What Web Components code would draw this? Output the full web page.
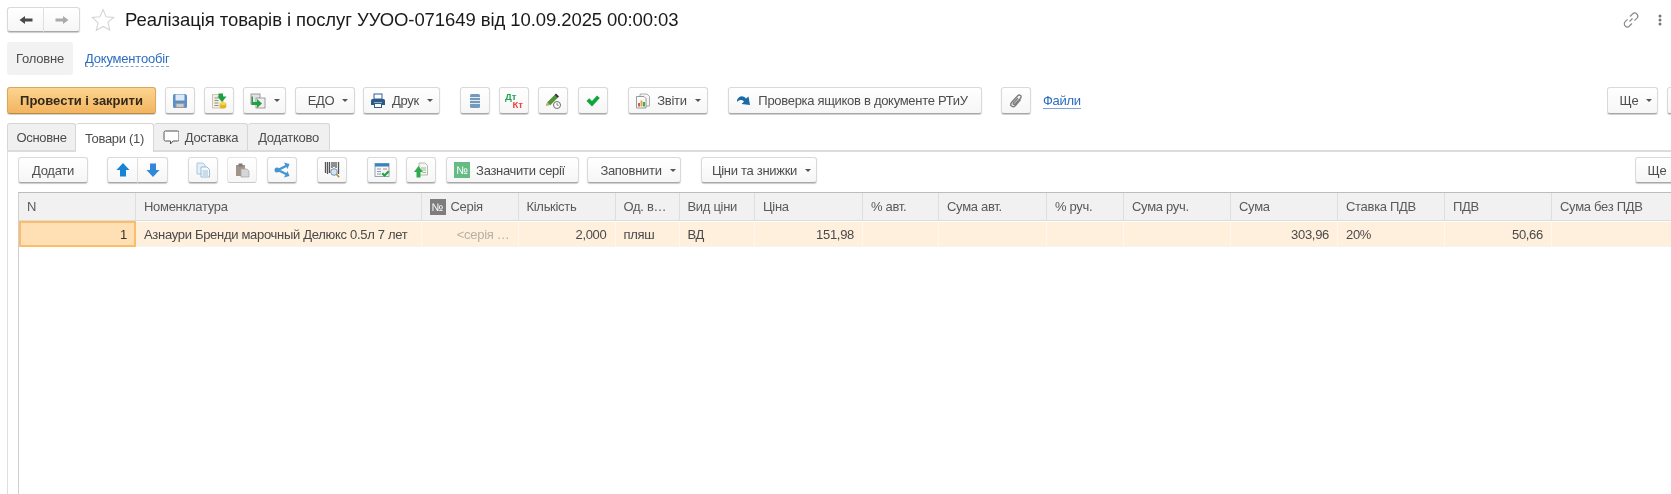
<!DOCTYPE html>
<html lang="uk">
<head>
<meta charset="utf-8">
<title>Реалізація товарів і послуг</title>
<style>
  html, body { margin: 0; height: 494px; overflow: hidden; background: #fff; }
  body { font: 13px "Liberation Sans", Arial, sans-serif; letter-spacing: -.3px; color: #4d4d4d; width: 1671px; filter: blur(.35px); }
</style>
</head>
<body>

<form-header>
  <ui-button slot="nav" seg="l" w="37"><ui-icon slot="icon" name="back"></ui-icon></ui-button>
  <ui-button slot="nav" seg="r" w="36"><ui-icon slot="icon" name="forward"></ui-icon></ui-button>
  Реалізація товарів і послуг УУОО-071649 від 10.09.2025 00:00:03
</form-header>

<section-bar>
  <section-item active>Головне</section-item>
  <section-item>Документообіг</section-item>
</section-bar>

<tool-bar style="--btn-h:27px" top="87">
  <ui-button primary w="149">Провести і закрити</ui-button>
  <ui-button w="30" ml="9"><ui-icon slot="icon" name="save"></ui-icon></ui-button>
  <ui-button w="30" ml="9"><ui-icon slot="icon" name="post"></ui-icon></ui-button>
  <ui-button w="43" ml="9" drop><ui-icon slot="icon" name="related"></ui-icon></ui-button>
  <ui-button w="60" ml="9" drop style="--pl:6px">ЕДО</ui-button>
  <ui-button w="77" ml="8" drop><ui-icon slot="icon" name="print"></ui-icon>Друк</ui-button>
  <ui-button w="30" ml="20"><ui-icon slot="icon" name="stack"></ui-icon></ui-button>
  <ui-button w="30" ml="9"><dt-kt slot="icon"></dt-kt></ui-button>
  <ui-button w="30" ml="9"><ui-icon slot="icon" name="pencil"></ui-icon></ui-button>
  <ui-button w="30" ml="10"><ui-icon slot="icon" name="check"></ui-icon></ui-button>
  <ui-button w="80" ml="20" drop><ui-icon slot="icon" name="report"></ui-icon>Звіти</ui-button>
  <ui-button w="254" ml="20" style="--pr:6px"><ui-icon slot="icon" name="turn"></ui-icon>Проверка ящиков в документе РТиУ</ui-button>
  <ui-button w="30" ml="19"><ui-icon slot="icon" name="clip"></ui-icon></ui-button>
  <link-text ml="12">Файли</link-text>
  <clip-end w="64">
    <ui-button w="51" drop style="--pl:7px">Ще</ui-button>
    <ui-button w="30" ml="9"></ui-button>
  </clip-end>
</tool-bar>

<tab-strip>
  <tab-item w="69">Основне</tab-item>
  <tab-item w="78" active>Товари (1)</tab-item>
  <tab-item w="94"><ui-icon slot="icon" name="comment"></ui-icon>Доставка</tab-item>
  <tab-item w="82">Додатково</tab-item>
</tab-strip>

<tab-panel>
  <tool-bar style="--btn-h:26px">
    <ui-button w="70">Додати</ui-button>
    <ui-button w="31" ml="19" seg="l"><ui-icon slot="icon" name="up"></ui-icon></ui-button>
    <ui-button w="30" seg="r"><ui-icon slot="icon" name="down"></ui-icon></ui-button>
    <ui-button w="30" ml="20"><ui-icon slot="icon" name="copy"></ui-icon></ui-button>
    <ui-button w="30" ml="9" off><ui-icon slot="icon" name="paste"></ui-icon></ui-button>
    <ui-button w="30" ml="10"><ui-icon slot="icon" name="share"></ui-icon></ui-button>
    <ui-button w="30" ml="20"><ui-icon slot="icon" name="barcode"></ui-icon></ui-button>
    <ui-button w="30" ml="20"><ui-icon slot="icon" name="tablecheck"></ui-icon></ui-button>
    <ui-button w="30" ml="9"><ui-icon slot="icon" name="upload"></ui-icon></ui-button>
    <ui-button w="133" ml="10" style="--pr:6px"><num-sign slot="icon" color="#66bb85"></num-sign>Зазначити серії</ui-button>
    <ui-button w="94" ml="8" drop style="--pl:8px">Заповнити</ui-button>
    <ui-button w="116" ml="20" drop style="--pl:5px">Ціни та знижки</ui-button>
    <clip-end w="36"><ui-button w="51" drop style="--pl:7px">Ще</ui-button></clip-end>
  </tool-bar>

  <data-grid>
    <grid-cell head>N</grid-cell>
    <grid-cell head>Номенклатура</grid-cell>
    <grid-cell head><num-sign color="#7d7d7d"></num-sign>Серія</grid-cell>
    <grid-cell head>Кількість</grid-cell>
    <grid-cell head>Од. в…</grid-cell>
    <grid-cell head>Вид ціни</grid-cell>
    <grid-cell head>Ціна</grid-cell>
    <grid-cell head>% авт.</grid-cell>
    <grid-cell head>Сума авт.</grid-cell>
    <grid-cell head>% руч.</grid-cell>
    <grid-cell head>Сума руч.</grid-cell>
    <grid-cell head>Сума</grid-cell>
    <grid-cell head>Ставка ПДВ</grid-cell>
    <grid-cell head>ПДВ</grid-cell>
    <grid-cell head>Сума без ПДВ</grid-cell>

    <grid-cell right current>1</grid-cell>
    <grid-cell>Азнаури Бренди марочный Делюкс 0.5л 7 лет</grid-cell>
    <grid-cell right hint>&lt;серія …</grid-cell>
    <grid-cell right>2,000</grid-cell>
    <grid-cell>пляш</grid-cell>
    <grid-cell>ВД</grid-cell>
    <grid-cell right>151,98</grid-cell>
    <grid-cell></grid-cell>
    <grid-cell></grid-cell>
    <grid-cell></grid-cell>
    <grid-cell></grid-cell>
    <grid-cell right>303,96</grid-cell>
    <grid-cell>20%</grid-cell>
    <grid-cell right>50,66</grid-cell>
    <grid-cell></grid-cell>
  </data-grid>
</tab-panel>

<script>
// Icon set, all on a 16x16 box
const ICONS = {
  back: '<path d="M1.500 8 7 4v2.600h7.500v2.800H7V12z" fill="#4a4a4a"/>',
  forward: '<path d="M14.500 8 9 4v2.600H1.500v2.800H9V12z" fill="#aaa"/>',
  save: '<path d="M1 2.500A1.500 1.500 0 0 1 2.500 1h11L15 2.500v11a1.500 1.500 0 0 1-1.500 1.500h-11A1.500 1.500 0 0 1 1 13.500z" fill="#5b8fca"/><rect x="3.500" y="1.500" width="9" height="6" fill="#dfe9f5"/><rect x="3.500" y="10" width="9" height="5" fill="#9a9a9a"/><rect x="4.500" y="11" width="7" height="3" fill="#ccc"/>',
  post: '<path d="M1.500 1.500h9l1.500 1.500v12h-10.500z" fill="#f1efe2" stroke="#bdb9a0" stroke-width=".8"/><path d="M3.500 5h4M3.500 7.500h4M3.500 10h4M3.500 12.500h4" stroke="#8f8f86"/><ellipse cx="12" cy="10.500" rx="3.300" ry="1.500" fill="#f6d548"/><path d="M8.700 10.500v3.500c0 .8 1.500 1.500 3.300 1.500s3.300-.7 3.300-1.500v-3.500c0 .8-1.500 1.500-3.300 1.500s-3.300-.7-3.300-1.500z" fill="#e3b525"/><path d="M7.500 .5h4.500v3h3.500L11 9 6.500 3.500h1z" fill="#1f9e40"/>',
  related: '<rect x="1" y="1" width="9" height="10" fill="#e3e3e3" stroke="#8a8a8a" stroke-width=".8"/><rect x="6" y="5" width="9" height="10" fill="#efefef" stroke="#8a8a8a" stroke-width=".8"/><path d="M3 3.500v5.500h4V6l5 4.500L7 15v-3H1.500V3.500z" fill="#22a044"/>',
  print: '<rect x="4" y="1" width="8" height="5" fill="#fff" stroke="#2f5f90"/><path d="M1 7.500A1.500 1.500 0 0 1 2.500 6h11A1.500 1.500 0 0 1 15 7.500V12h-3V9.500H4V12H1z" fill="#2a5a8c"/><rect x="4.500" y="10.500" width="7" height="4" fill="#fff" stroke="#2f5f90"/>',
  stack: '<rect x="3" y="1" width="10" height="14" rx="1.500" fill="#7399bd"/><path d="M3 4.500h10M3 7.500h10M3 10.500h10" stroke="#dfe9f2" stroke-width="1"/>',
  pencil: '<path d="M1 12.500 2.500 9 9.500 2l3 3-7 7z" fill="#4f9438"/><path d="m9.500 2 1.500-1.500 3 3L12.500 5z" fill="#333"/><path d="M1 12.500 2.500 9l2.500 3z" fill="#d0a868"/><circle cx="12" cy="12" r="3.500" fill="#fff" stroke="#6a6a6a"/><path d="M12 10v2.200h1.700" stroke="#6a6a6a" fill="none" stroke-width=".8"/>',
  check: '<path d="m1.500 8 2.700-2.700L7 8l5-5.500L14.800 5 7 13.500z" fill="#12a53c"/>',
  report: '<path d="M5 1h7l2.500 2.500V13H5z" fill="#f4f4f4" stroke="#999" stroke-width=".8"/><path d="M1.500 3.500H9l2 2V15H1.500z" fill="#fbfbfb" stroke="#808080" stroke-width=".8"/><rect x="3" y="10" width="2" height="3.500" fill="#d9584c"/><rect x="5.500" y="7.500" width="2" height="6" fill="#e0a83a"/><rect x="8" y="9" width="2" height="4.500" fill="#3ea860"/>',
  turn: '<path d="M1 7c2-4.500 6-5 9-1.500L12.500 3.500l1.500 8.500-8.500-1L8 8.500C6 6.500 3.500 6.500 1 9z" fill="#1a6aa8"/>',
  clip: '<path d="M12.500 6.500 7.500 12.500c-1.300 1.500-3 1.500-4 .6s-1-2.500.2-3.900L9.500 3c1-1.100 2.200-1.200 3-.5s.8 1.900-.2 3L7 11c-.5.600-1.200.7-1.600.3s-.3-1 .2-1.600L10 5" fill="none" stroke="#7d7d7d" stroke-width="1.400"/>',
  comment: '<path d="M2.500 2h12A1.500 1.500 0 0 1 16 3.500v7a1.500 1.500 0 0 1-1.500 1.500H10l-2.500 3V12h-5A1.500 1.500 0 0 1 1 10.500v-7A1.500 1.500 0 0 1 2.500 2z" fill="#fff" stroke="#555" stroke-width="1"/>',
  up: '<path d="M8 1 14.500 8H11v6.500H5V8H1.500z" fill="#1783d4"/>',
  down: '<path d="M8 15 14.500 8H11V1.500H5V8H1.500z" fill="#2f88da"/>',
  copy: '<path d="M2 1h6l2 2v9H2z" fill="#e6f0f8" stroke="#9dbcd6" stroke-width=".8"/><path d="M6 5h6l2.500 2.500V15H6z" fill="#f7fafd" stroke="#86abca" stroke-width=".8"/><path d="M7.500 9h5.500M7.500 11h5.500M7.500 13h5.500" stroke="#9dbcd6"/>',
  paste: '<path d="M2 3h9v11H2z" fill="#a19489"/><rect x="4.500" y="1.500" width="4" height="3" fill="#85796f"/><path d="M7 7h6l2 2v6H7z" fill="#d6d6d6" stroke="#a5a5a5" stroke-width=".7"/>',
  share: '<path d="M13 3.500 6 7a1.200 1.200 0 0 0 0 2l7 3.500" fill="none" stroke="#4795d0" stroke-width="2.400"/><circle cx="3" cy="8" r="2.500" fill="#4795d0"/><path d="m10 .5 5.500 1.500-2 5zM10 15.500l5.500-1.500-2-5z" fill="#4795d0"/>',
  barcode: '<path d="M1.500 0v11M3.500 0v12M5.500 0v11M8 0v6M10 0v5M12 0v6M14.500 0v12" stroke="#555" stroke-width="1.300"/><circle cx="10" cy="10" r="3.300" fill="#d5e4f2" stroke="#6f93b5"/><path d="m12.200 12.200 3 3" stroke="#c0903f" stroke-width="1.700"/>',
  tablecheck: '<rect x="1" y="1.500" width="14" height="13" fill="#f4f6f8" stroke="#7f909f" stroke-width=".8"/><rect x="1" y="1.500" width="14" height="3" fill="#3a81c3"/><path d="M3 7h4M3 9.500h4M3 12h4" stroke="#8e9ca9"/><path d="M9 7h4" stroke="#e07b6a"/><path d="m7.500 12 1.500-1.500L10.500 12 14 8.500l1.500 1.500-5 5z" fill="#1da343"/>',
  upload: '<path d="M6 1h6l2.500 2.500V13H6z" fill="#f5f7f2" stroke="#9eae97" stroke-width=".8"/><path d="M8 6h5M8 8h5M9.500 10.500h3.500" stroke="#9fbc92"/><path d="M5.500 4 10 10H7.500v5.500h-4V10H1z" fill="#2fab4e"/>'
};

// Shared base: each element has a static css and markup that go in an open shadow root
class ShadowBase extends HTMLElement {
  constructor() {
    super();
    this.attachShadow({ mode: 'open' }).innerHTML = `<style>${this.constructor.css}</style>${this.constructor.markup}`;
  }
  connectedCallback() {
    if (this.hasAttribute('w')) this.style.width = this.getAttribute('w') + 'px';
    if (this.hasAttribute('ml')) this.style.marginLeft = this.getAttribute('ml') + 'px';
  }
}

class UiIcon extends HTMLElement {
  constructor() {
    super();
    this.attachShadow({ mode: 'open' });
  }
  connectedCallback() {
    const size = this.getAttribute('size') || 16;
    this.shadowRoot.innerHTML = `<style>:host{display:block;line-height:0}</style>
      <svg width="${size}" height="${size}" viewBox="0 0 16 16">${ICONS[this.getAttribute('name')]}</svg>`;
  }
}

class UiButton extends ShadowBase {
  static css = `
    :host { display: block; flex: none; box-sizing: border-box; height: var(--btn-h, 27px); }
    .b { box-sizing: border-box; height: 100%; display: flex; align-items: center; justify-content: center; gap: 6px;
      padding: 0 var(--pr, 0) 0 var(--pl, 0);
      background: linear-gradient(#fff, #f6f6f6); border: 1px solid #d9d9d9; border-bottom-color: #a8a8a8;
      border-radius: 3px; box-shadow: 0 1px 1px rgba(0,0,0,.2); color: #4d4d4d; white-space: nowrap; }
    :host([primary]) .b { background: linear-gradient(#fbd48f, #f3b45f); border-color: #d9a85c #d9a85c #b98a43;
      color: #33291a; font-weight: bold; letter-spacing: 0; }
    :host([seg=l]) .b { border-radius: 3px 0 0 3px; border-right-color: #e4e4e4; }
    :host([seg=r]) .b { border-radius: 0 3px 3px 0; border-left: 0; }
    :host([off]) .b { border-color: #e6e6e6; border-bottom-color: #c8c8c8; box-shadow: none; }
    .arrow { display: none; width: 0; height: 0; margin-left: 2px; border: 3px solid transparent;
      border-top-color: #555; border-bottom: 0; }
    :host([drop]) .arrow { display: block; }
  `;
  static markup = `<div class="b"><slot name="icon"></slot><slot></slot><i class="arrow"></i></div>`;
}

class FormHeader extends ShadowBase {
  static css = `
    :host { display: flex; align-items: center; height: 25px; padding: 7px 0 0 7px; color: #1a1a1a; font-size: 18.500px; letter-spacing: -.08px; white-space: nowrap; --btn-h: 25px; }
    .nav { display: flex; }
    .star { margin: 0 10px 0 11px; }
    .tools { margin-left: auto; display: flex; align-items: center; gap: 19px; padding-right: 9px; }
    .title { flex: none; }
  `;
  static markup = `
    <div class="nav"><slot name="nav"></slot></div>
    <svg class="star" width="24" height="24" viewBox="0 0 22 22"><path d="m11 1.500 2.800 6.500 7 .6-5.300 4.600 1.600 6.900L11 16.900l-6.100 3.700 1.600-6.900L1.200 8.600l7-.6z" fill="#fff" stroke="#d4d4d4"/></svg>
    <span class="title"><slot></slot></span>
    <div class="tools">
      <svg width="16" height="16" viewBox="0 0 16 16" fill="none" stroke="#8a8a8a" stroke-width="1.200"><path d="M6.500 9.500 9.500 6.500M7 4.500 9.500 2a3 3 0 0 1 4.300 4.300l-2.400 2.400M9 11.500 6.500 14A3 3 0 0 1 2.200 9.700l2.400-2.400"/></svg>
      <svg width="4" height="12" viewBox="0 0 4 12" fill="#777"><circle cx="2" cy="2" r="1.500"/><circle cx="2" cy="6" r="1.500"/><circle cx="2" cy="10" r="1.500"/></svg>
    </div>
  `;
}

class SectionBar extends ShadowBase {
  static css = `:host { display: flex; align-items: stretch; gap: 12px; height: 33px; margin: 10px 0 12px 7px; }`;
  static markup = `<slot></slot>`;
}

class SectionItem extends ShadowBase {
  static css = `
    :host { display: flex; align-items: center; color: #2a6dc0; letter-spacing: -.2px; }
    span { border-bottom: 1px dashed #7ba4d8; line-height: 15px; }
    :host([active]) { background: #f2f2f2; border-radius: 3px; padding: 0 9px; color: #4d4d4d; }
    :host([active]) span { border: 0; }
  `;
  static markup = `<span><slot></slot></span>`;
}

class ToolBar extends ShadowBase {
  static css = `:host { display: flex; align-items: flex-start; height: 28px; padding-left: 7px; overflow: hidden; }`;
  static markup = `<slot></slot>`;
}

class ClipEnd extends ShadowBase {
  static css = `:host { display: flex; flex: none; margin-left: auto; height: 28px; overflow: hidden; }`;
  static markup = `<slot></slot>`;
}

class LinkText extends ShadowBase {
  static css = `:host { display: block; align-self: center; color: #2a6dc0; border-bottom: 1px solid #7ba4d8; line-height: 14px; }`;
  static markup = `<slot></slot>`;
}

class DtKt extends ShadowBase {
  static css = `
    :host { display: block; width: 18px; font: bold 9.500px/8px "Liberation Sans", Arial, sans-serif; letter-spacing: 0; }
    .d { color: #22a557; } .k { color: #e8453c; display: block; text-align: right; }
  `;
  static markup = `<span class="d">Дт</span><span class="k">Кт</span>`;
}

class NumSign extends ShadowBase {
  static css = `
    :host { display: inline-flex; flex: none; align-items: center; justify-content: center; width: 16px; height: 16px;
      color: #fff; font: 11px "Liberation Sans", Arial, sans-serif; letter-spacing: 0; background: var(--c); }
  `;
  static markup = `№`;
  connectedCallback() { this.style.setProperty('--c', this.getAttribute('color')); }
}

class TabStrip extends ShadowBase {
  static css = `:host { display: flex; height: 27px; margin: 8px 0 0 7px; }`;
  static markup = `<slot></slot>`;
}

class TabItem extends ShadowBase {
  static css = `
    :host { display: flex; flex: none; box-sizing: border-box; align-items: center; justify-content: center; gap: 6px;
      background: #f0f0f0; border: 1px solid #d6d6d6; border-bottom: 0; border-left: 0; border-radius: 3px 3px 0 0; }
    :host(:first-child) { border-left: 1px solid #d6d6d6; }
    :host([active]) { background: #fff; height: 29px; position: relative; z-index: 1; }
  `;
  static markup = `<slot name="icon"></slot><slot></slot>`;
}

class TabPanel extends ShadowBase {
  static css = `
    :host { display: block; box-sizing: border-box; height: 344px; margin-left: 7px; padding: 5px 0 0 10px;
      border-top: 2px solid #dcdcdc; border-left: 1px solid #dedede; }
    ::slotted(tool-bar) { padding-left: 0; margin-bottom: 7px; }
  `;
  static markup = `<slot></slot>`;
}

class DataGrid extends ShadowBase {
  static css = `
    :host { display: grid; box-sizing: border-box; height: 302px; align-content: start;
      grid-template-columns: 117px 285.500px 97px 97px 64px 75.500px 108px 76px 108px 77px 107px 107px 107px 107px 120px;
      grid-template-rows: 28px 26px; border-top: 1px solid #bcbcbc; border-left: 1px solid #d0d0d0; }
  `;
  static markup = `<slot></slot>`;
}

class GridCell extends ShadowBase {
  static css = `
    :host { display: flex; align-items: center; gap: 5px; box-sizing: border-box; min-width: 0; padding: 0 8px; white-space: nowrap; overflow: hidden;
      background: #ffefdd; color: #4a4a4a; border-right: 1px solid #fff7ee; border-bottom: 1px solid #f3f3f3; border-top: 1px solid #fff; }
    :host([head]) { background: #f1f1f1; color: #5a5a5a; border-top: 0; border-right-color: #dedede; border-bottom: 1px solid #dcdcdc; }
    :host([right]) { justify-content: flex-end; }
    :host([hint]) { color: #b8b0a6; }
    :host([current]) { background: #ffdfb4; border: 2px solid #fbbd6c; border-bottom-width: 2px; color: #333; padding-right: 7px; }
  `;
  static markup = `<slot></slot>`;
}

customElements.define('ui-icon', UiIcon);
customElements.define('ui-button', UiButton);
customElements.define('form-header', FormHeader);
customElements.define('section-bar', SectionBar);
customElements.define('section-item', SectionItem);
customElements.define('tool-bar', ToolBar);
customElements.define('clip-end', ClipEnd);
customElements.define('link-text', LinkText);
customElements.define('dt-kt', DtKt);
customElements.define('num-sign', NumSign);
customElements.define('tab-strip', TabStrip);
customElements.define('tab-item', TabItem);
customElements.define('tab-panel', TabPanel);
customElements.define('data-grid', DataGrid);
customElements.define('grid-cell', GridCell);
</script>
</body>
</html>
